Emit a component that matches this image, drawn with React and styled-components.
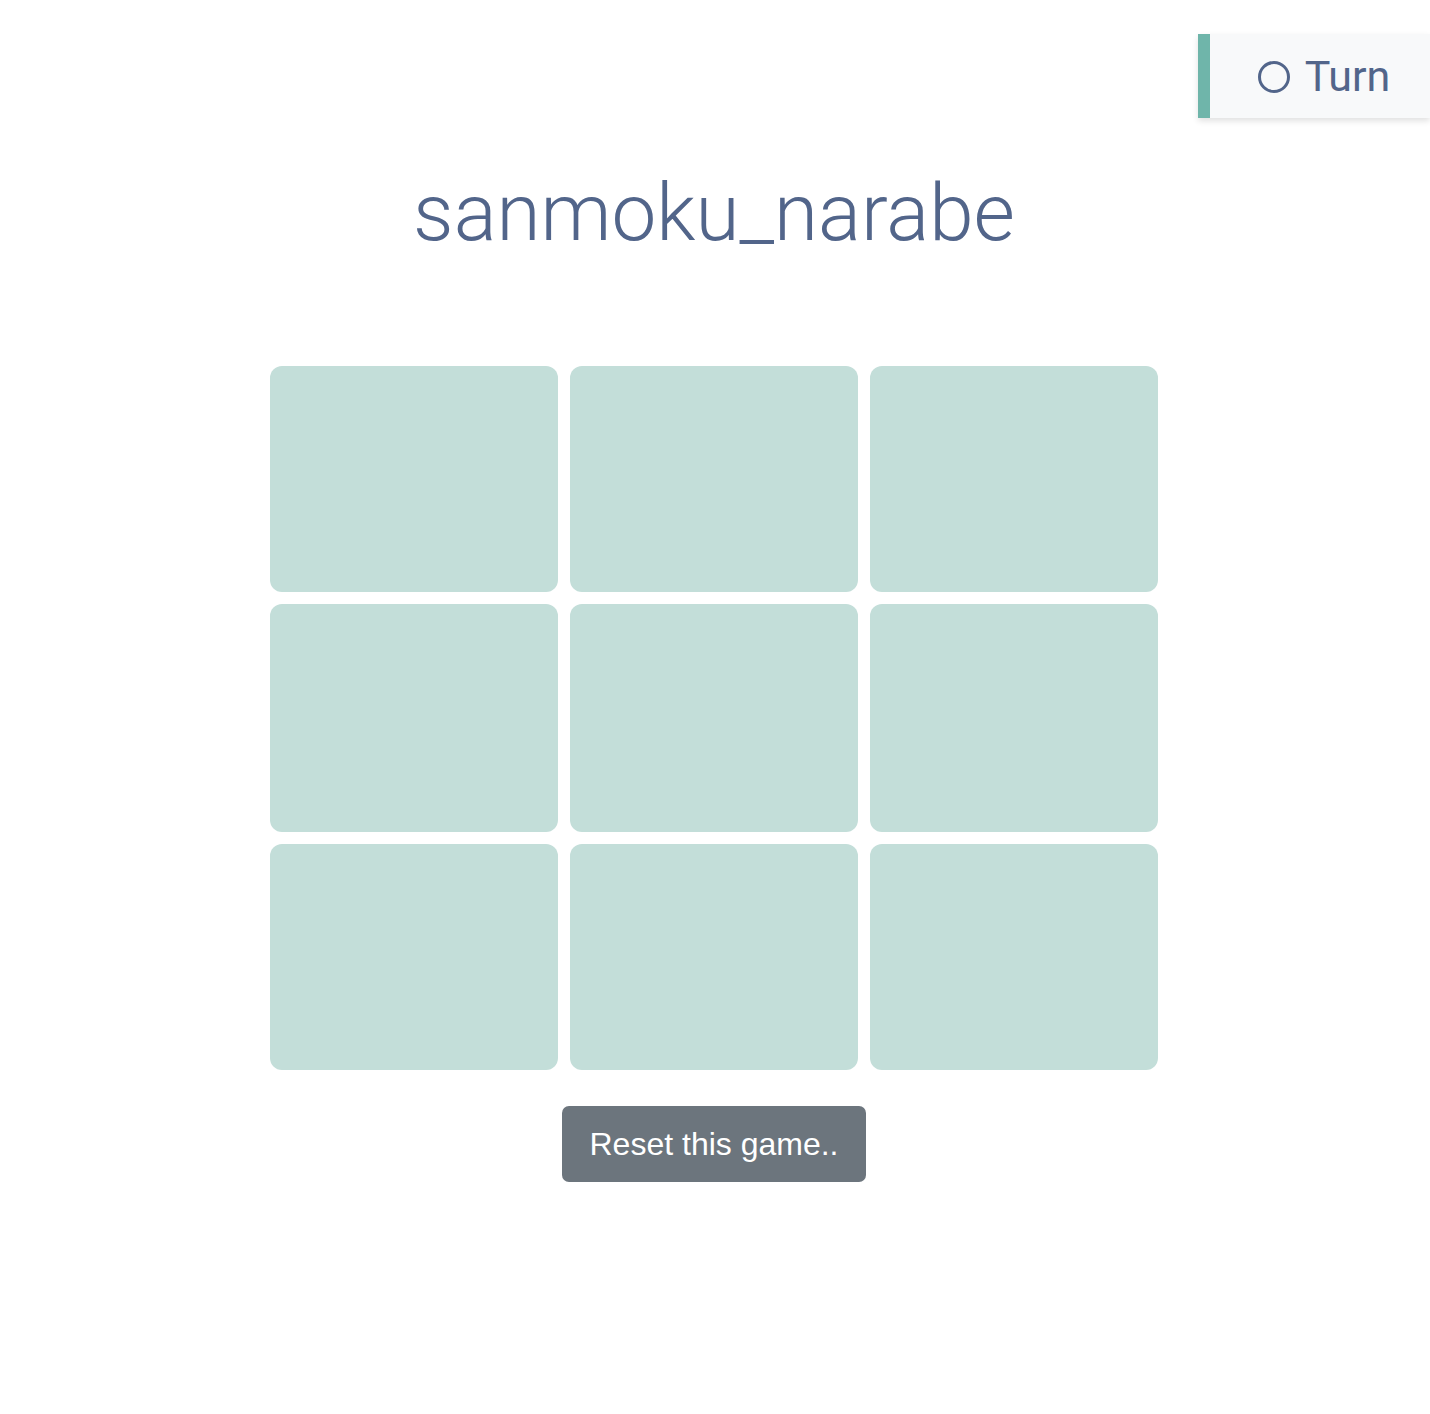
import React from 'react';
import styled, { createGlobalStyle } from 'styled-components';

const GlobalStyle = createGlobalStyle`
  html, body {
    margin: 0;
    padding: 0;
    background: #ffffff;
  }
  body {
    font-family: "Liberation Sans", Arial, sans-serif;
  }
`;

const Page = styled.div`
  min-height: 1414px;
  padding-right: 2px;
  display: flex;
  flex-direction: column;
  align-items: center;
`;

const Header = styled.div`
  align-self: stretch;
  display: flex;
  justify-content: flex-end;
  margin: 34px -2px 0 0;
`;

const TurnBox = styled.div`
  width: 212px;
  height: 84px;
  padding-left: 8px;
  display: flex;
  align-items: center;
  justify-content: center;
  gap: 15px;
  background-color: #f8f9fa;
  border-left: 12px solid #6fb5aa;
  box-shadow: 0 3px 6px rgba(0, 0, 0, 0.12);
  color: #52658a;
  font-family: Roboto, "Liberation Sans", sans-serif;
  font-size: 43px;
  font-weight: 400;
  box-sizing: content-box;
`;

const Ring = styled.span`
  width: 26px;
  height: 26px;
  border: 3px solid #52658a;
  border-radius: 50%;
  display: inline-block;
  margin-top: 2px;
`;

const Title = styled.h1`
  margin: 49px 0 0;
  font-family: Roboto, "Liberation Sans", sans-serif;
  font-size: 80px;
  line-height: 1.15;
  font-weight: 300;
  color: #52658a;
  text-align: center;
`;

const Board = styled.div`
  margin-top: 107px;
  display: grid;
  grid-template-columns: repeat(3, 288px);
  grid-template-rows: 226px 228px 226px;
  gap: 12px;
`;

const Cell = styled.div`
  background-color: #c3ded9;
  border-radius: 12px;
  cursor: pointer;
`;

const ResetButton = styled.button`
  margin-top: 36px;
  width: 304px;
  height: 76px;
  border: none;
  border-radius: 7px;
  background-color: #6c757d;
  color: #ffffff;
  font-family: "Liberation Sans", Arial, sans-serif;
  font-size: 32px;
  cursor: pointer;
`;

const App = () => {
  const cells = Array.from({ length: 9 }, (_, i) => i);
  return (
    <Page>
      <GlobalStyle />
      <Header>
        <TurnBox>
          <Ring />
          <span>Turn</span>
        </TurnBox>
      </Header>
      <Title>sanmoku_narabe</Title>
      <Board>
        {cells.map((i) => (
          <Cell key={i} />
        ))}
      </Board>
      <ResetButton>Reset this game..</ResetButton>
    </Page>
  );
};

export default App;
